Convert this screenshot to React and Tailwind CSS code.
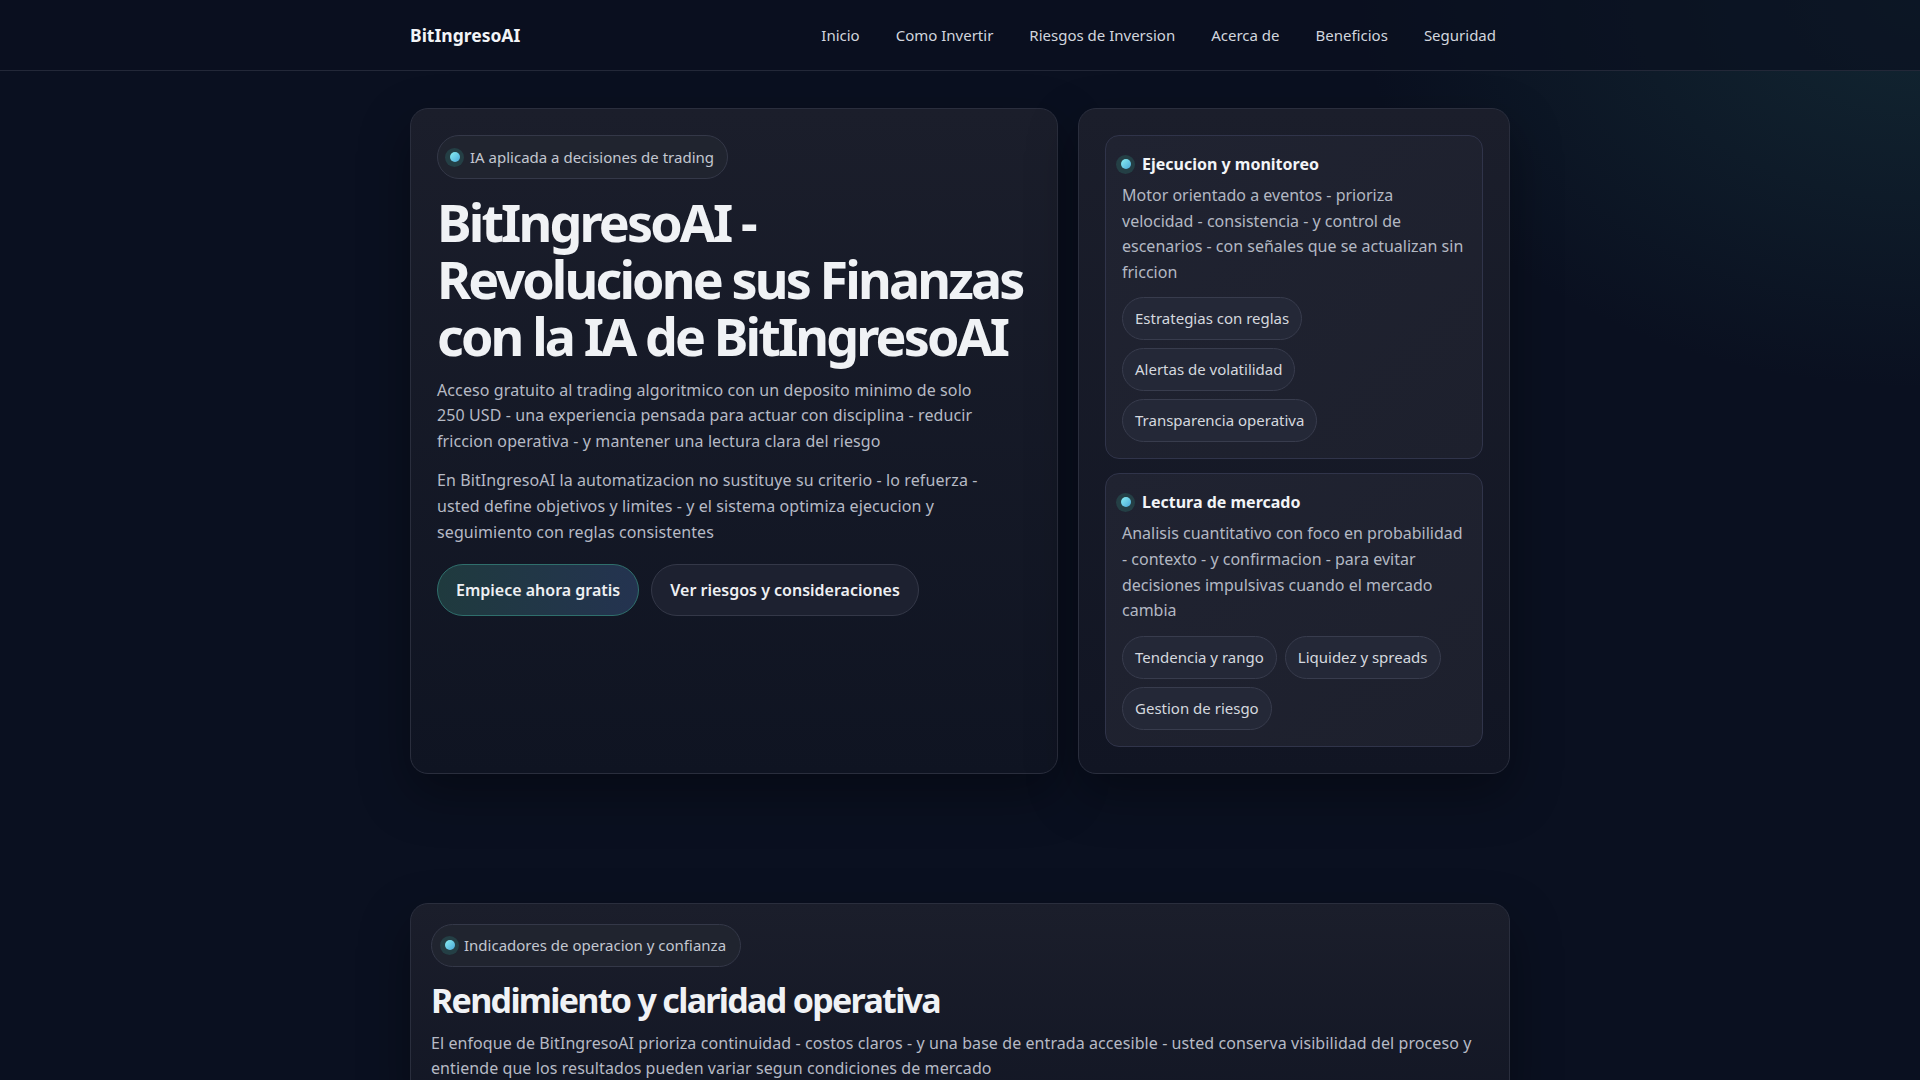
import { memo } from "react"

const navLinks = ["Inicio", "Como Invertir", "Riesgos de Inversion", "Acerca de", "Beneficios", "Seguridad"]

const features = [
    {
        title: "Ejecucion y monitoreo",
        text: "Motor orientado a eventos - prioriza velocidad - consistencia - y control de escenarios - con señales que se actualizan sin friccion",
        tags: ["Estrategias con reglas", "Alertas de volatilidad", "Transparencia operativa"],
    },
    {
        title: "Lectura de mercado",
        text: "Analisis cuantitativo con foco en probabilidad - contexto - y confirmacion - para evitar decisiones impulsivas cuando el mercado cambia",
        tags: ["Tendencia y rango", "Liquidez y spreads", "Gestion de riesgo"],
    },
]

function Dot() {
    return (
        <span className="flex h-[19px] w-[19px] shrink-0 items-center justify-center rounded-full bg-[#243f45]">
            <span className="h-[10px] w-[10px] rounded-full bg-gradient-to-br from-[#8af0f2] to-[#4aa8d8]"></span>
        </span>
    )
}

export default function App() {
    return (
        <div className="min-h-screen bg-[#0a1020] bg-[radial-gradient(780px_540px_at_100%_0%,rgba(44,110,108,0.24),transparent_72%)] font-['Noto_Sans',sans-serif] text-[#e9ebf0]">
            <header className="h-[71px] border-b border-[#232838] bg-[#0a1020]/70">
                <div className="mx-auto flex h-full max-w-[1100px] items-center justify-between">
                    <span className="text-[17.5px] font-bold text-[#f2f4f7]">BitIngresoAI</span>
                    <nav className="flex items-center gap-[8px]">
                        {navLinks.map((link) => (
                            <a key={link} href="#" className="px-[14px] py-2 text-[15px] text-[#d2d6de]">{link}</a>
                        ))}
                    </nav>
                </div>
            </header>

            <section className="mx-auto grid max-w-[1100px] grid-cols-[1.5fr_1fr] gap-5 pt-[37px]">
                <div className="rounded-[18px] border border-[#2a2e3d] bg-gradient-to-b from-[#1b1e2b] to-[#0f1422] p-[26px] shadow-[0_20px_50px_rgba(0,0,0,0.35)]">
                    <span className="inline-flex h-[44px] items-center gap-[6px] rounded-full border border-[#343848] bg-[#20242f] pl-[7px] pr-[13px] text-[15px] text-[#c3c7d1]">
                        <Dot />
                        IA aplicada a decisiones de trading
                    </span>
                    <h1 className="mt-[14px] text-[52px] font-bold leading-[1.1] tracking-[-0.055em] text-[#f0f2f5]">
                        BitIngresoAI - Revolucione sus Finanzas con la IA de BitIngresoAI
                    </h1>
                    <p className="mt-[13px] max-w-[552px] text-[16px] leading-[1.6] tracking-[0.1px] text-[#b6bac5]">
                        Acceso gratuito al trading algoritmico con un deposito minimo de solo 250 USD - una experiencia pensada para actuar con disciplina - reducir friccion operativa - y mantener una lectura clara del riesgo
                    </p>
                    <p className="mt-[14px] max-w-[552px] text-[16px] leading-[1.6] tracking-[0.1px] text-[#b6bac5]">
                        En BitIngresoAI la automatizacion no sustituye su criterio - lo refuerza - usted define objetivos y limites - y el sistema optimiza ejecucion y seguimiento con reglas consistentes
                    </p>
                    <div className="mt-[19px] flex gap-3">
                        <a href="#" className="flex h-[52px] items-center rounded-full border border-[#2f6f6c] bg-gradient-to-r from-[#1f3a3e] to-[#243350] px-[18px] text-[16px] font-semibold text-[#eef0f3]">Empiece ahora gratis</a>
                        <a href="#" className="flex h-[52px] items-center rounded-full border border-[#343848] bg-[#1d2130] px-[18px] text-[16px] font-semibold text-[#eef0f3]">Ver riesgos y consideraciones</a>
                    </div>
                </div>

                <div className="flex flex-col gap-[14px] rounded-[18px] border border-[#2a2e3d] bg-gradient-to-b from-[#1b1e2b] to-[#111523] p-[26px] shadow-[0_20px_50px_rgba(0,0,0,0.35)]">
                    {features.map((feature) => (
                        <FeatureCard key={feature.title} feature={feature} />
                    ))}
                </div>
            </section>

            <section className="mx-auto max-w-[1100px] pt-[129px]">
                <div className="rounded-[18px] border border-[#2a2e3d] bg-gradient-to-b from-[#1b1e2b] to-[#131725] p-[20px] shadow-[0_20px_50px_rgba(0,0,0,0.35)]">
                    <span className="inline-flex h-[43px] items-center gap-[5px] rounded-full border border-[#343848] bg-[#20242f] pl-[8px] pr-[14px] text-[15px] text-[#c3c7d1]">
                        <Dot />
                        Indicadores de operacion y confianza
                    </span>
                    <h2 className="mt-[13px] text-[34px] font-bold leading-[1.2] tracking-[-0.05em] text-[#f0f2f5]">Rendimiento y claridad operativa</h2>
                    <p className="mt-[10px] text-[16px] leading-[1.6] tracking-[0.08px] text-[#b6bac5]">
                        El enfoque de BitIngresoAI prioriza continuidad - costos claros - y una base de entrada accesible - usted conserva visibilidad del proceso y entiende que los resultados pueden variar segun condiciones de mercado
                    </p>
                </div>
            </section>
        </div>
    )
}

const FeatureCard = memo(function FeatureCard({ feature }) {
    return (
        <div className="rounded-[14px] border border-[#30344a] bg-gradient-to-br from-[#202331] to-[#1d202d] p-4">
            <div className="-ml-[6px] flex items-center gap-[7px]">
                <Dot />
                <h3 className="text-[16px] font-bold leading-6 text-[#f2f4f7]">{feature.title}</h3>
            </div>
            <p className="mt-[7px] text-[16px] leading-[1.6] text-[#b3b8c3]">{feature.text}</p>
            <div className="mt-3 flex flex-wrap gap-2">
                {feature.tags.map((tag) => (
                    <span key={tag} className="rounded-full border border-[#383c4d] bg-[#242837] px-[12px] py-[9px] text-[15px] leading-[23px] text-[#d5d8df]">{tag}</span>
                ))}
            </div>
        </div>
    )
})
